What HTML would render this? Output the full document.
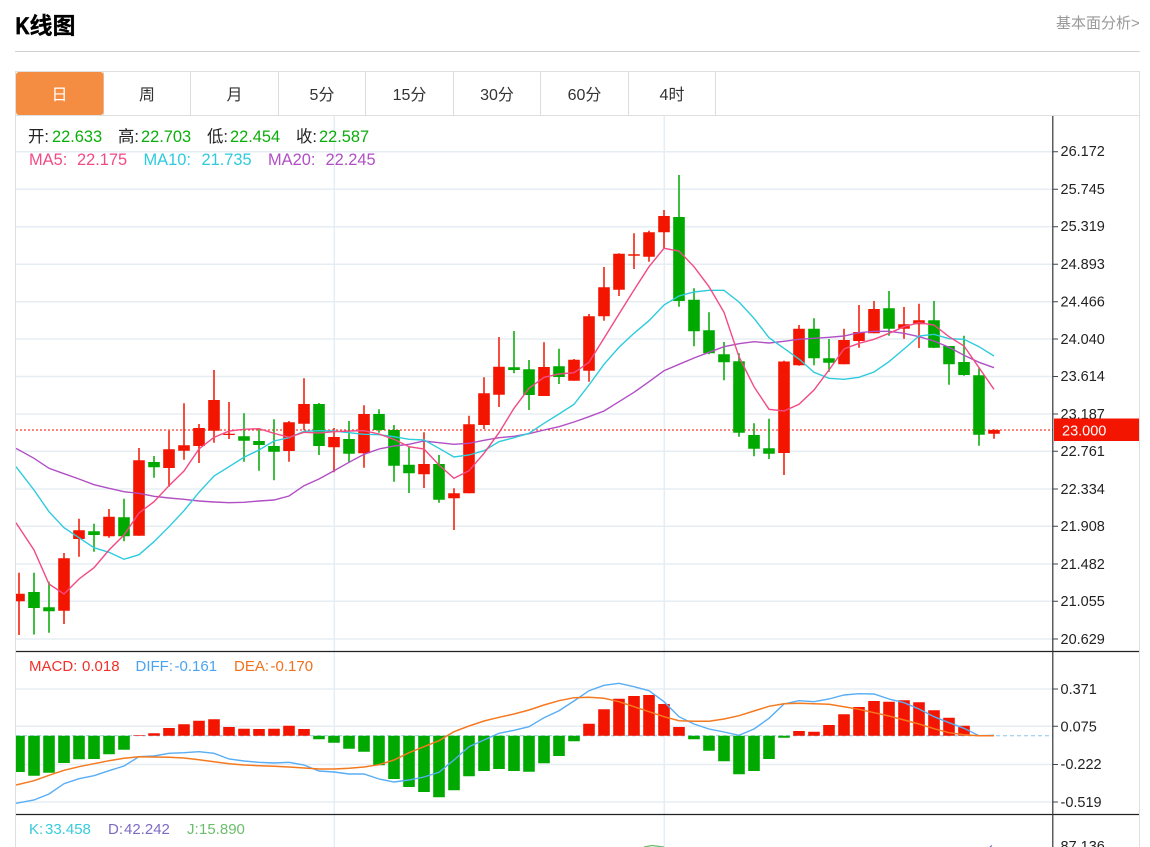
<!DOCTYPE html>
<html lang="zh"><head><meta charset="utf-8"><title>K线图</title>
<style>
html,body{margin:0;padding:0;background:#fff;width:1150px;height:847px;overflow:hidden}
svg{display:block;position:absolute;left:0;top:0}
text{font-family:"Liberation Sans","Noto Sans CJK SC",sans-serif;white-space:pre}
.ax{font-size:14.5px;fill:#222}
.t{font-size:16px;fill:#333;text-anchor:middle}
.l{font-size:16.4px}
.s{font-size:15px}
</style></head><body>
<svg width="1150" height="847" viewBox="0 0 1150 847" xmlns="http://www.w3.org/2000/svg">
<defs><clipPath id="c"><rect x="16" y="116" width="1037" height="731"/></clipPath></defs>
<text x="15.5" y="34" textLength="14" lengthAdjust="spacingAndGlyphs" style="font-size:24.5px;font-weight:bold;fill:#000;stroke:#000;stroke-width:.7">K</text>
<text x="29.5" y="33.5" style="font-size:23px;font-weight:bold;fill:#000;stroke:#000;stroke-width:.3">线图</text>
<text x="1056" y="28" style="font-size:15px;fill:#999">基本面分析&gt;</text>
<path d="M15 51.5H1140" stroke="#d2d2d2" fill="none"/>
<!-- frame -->
<path d="M15.5 847V71.5H1139.5V847" stroke="#dfdfdf" fill="none"/>
<path d="M15.5 115.5H1139.5" stroke="#dfdfdf" fill="none"/>
<path d="M103.5 72V115M190.5 72V115M278.5 72V115M365.5 72V115M453.5 72V115M540.5 72V115M628.5 72V115M715.5 72V115" stroke="#dcdcdc" fill="none"/>
<rect x="16" y="72" width="87.5" height="43" rx="3" fill="#f48c42"/>
<text x="59.5" y="100" class="t" style="fill:#fff">日</text>
<text x="147" y="100" class="t">周</text>
<text x="234.5" y="100" class="t">月</text>
<text x="322" y="100" class="t">5分</text>
<text x="409.5" y="100" class="t">15分</text>
<text x="497" y="100" class="t">30分</text>
<text x="584.5" y="100" class="t">60分</text>
<text x="672" y="100" class="t">4时</text>
<!-- grid -->
<path d="M16 151.7H1053M16 189.2H1053M16 226.7H1053M16 264.2H1053M16 301.7H1053M16 339H1053M16 376.5H1053M16 414H1053M16 451.3H1053M16 489H1053M16 526.3H1053M16 564H1053M16 601.3H1053M16 639H1053M16 689H1053M16 726.3H1053M16 764.5H1053M16 802H1053M334.3 116V847M664.3 116V847" stroke="#e6eef4" stroke-width="1.5" fill="none"/>
<path d="M16 430H1053" stroke="#f33c30" stroke-width="1.3" stroke-dasharray="2 2" fill="none"/>
<path d="M16 735.7H1053" stroke="#8cc6e8" stroke-width="1" stroke-dasharray="4 3" fill="none"/>
<g clip-path="url(#c)" fill="none">
<!-- candles wicks -->
<path stroke="#f41500" stroke-width="1.5" d="M19 572.7V635M64 553V624M79 518.7V556.7M109 509V537.7M139 448V535.7M169 430.7V486.7M184 403.3V459.7M199 424V463M214 370V442.7M229 402V439M289 421V461.7M304 378.3V430M334 428V472.3M364 405.3V467.7M424 432.3V488M454 488.3V530M469 415.7V493.3M484 377.3V429M499 337V407M544 342.3V396M574 359V380.7M589 314V381.7M604 267V320.7M619 253.3V296M634 233.3V269M649 230.7V261.7M664 210V248M784 360.7V475M799 325V365.7M844 328.7V364.3M859 305V347.7M874 301V333.3M904 307V338.7M919 303.7V348M994 429.3V438.7"/>
<path stroke="#00a900" stroke-width="1.5" d="M34 572.7V634.5M49 581.7V632.7M94 523.7V551.7M124 498.7V541.3M154 456V477.7M244 413.3V461.7M259 429.3V470.7M274 419.3V480.3M319 403V455M349 421V462.3M379 409.3V432.7M394 425V481.7M409 446V493M439 455V502.7M514 331V373.3M529 360V410M559 348.7V384M679 175V306.7M694 288.3V346.3M709 312.3V354.3M724 342V380.3M739 353.3V436.7M754 423.3V456.3M769 418.7V459M814 318.3V365.3M829 339V371.7M889 291V335.7M934 301V348M949 346V384.7M964 335.7V375.7M979 368.3V445.7"/>
<!-- candle bodies -->
<path stroke="#f41500" stroke-width="11.6" d="M19 593.7V601.3M64 558.3V610.7M79 530.3V539M109 516.7V536.3M139 460.3V535.7M169 449.3V468M184 445.3V450.7M199 428V446M214 400V430.7M229 433.7V435M289 422.3V451M304 404V423.7M334 437V447.3M364 414V453.3M424 464V474.3M454 493.3V498.3M469 424.3V493.3M484 393.3V425M499 366.7V394.7M544 367V396M574 359.7V380.7M589 316.3V370.7M604 287.3V316.3M619 253.7V289.7M634 254.3V255.7M649 232.3V256.7M664 216V232.3M784 361.5V453M799 328.7V365.3M844 340V364.3M859 332V341M874 309V333.3M904 324.3V328.7M919 320.3V324.3M994 430V433.7"/>
<path stroke="#00a900" stroke-width="11.6" d="M34 592V608M49 607.3V611.3M94 531.3V535M124 517.3V536.3M154 462V467.3M244 436.3V440.7M259 441V445M274 446V451.7M319 404V446M349 439V453.7M379 414V430M394 430V465.7M409 464.7V473.3M439 464V499.7M514 367.3V370M529 369.3V395M559 366.3V377M679 217V301M694 299.7V331.3M709 330.3V353.3M724 354.3V362.3M739 361.3V432.7M754 435V448.7M769 448.3V453.7M814 328.7V358.3M829 358.3V362.7M889 308.3V328.7M934 320.3V347.7M949 346V364.3M964 362V375M979 375.3V434.7"/>
<!-- MA lines -->
<polyline stroke="#b14fc4" stroke-width="1.4" points="16,448.3 34,458.3 49,468.3 64,473.7 79,479 94,484.7 109,488.3 124,491.7 139,493.3 154,496.3 169,498 184,499.3 199,501 214,502 229,502.7 244,502.3 259,501 274,500 289,496 304,485.7 319,479 334,470.7 349,462.3 364,454.3 379,449 394,446 409,444.3 424,441 439,442.7 454,444.3 469,443.3 484,440.3 499,437.7 514,436.3 529,433.7 544,430 559,426.7 574,422 589,416.7 604,411 619,401.7 634,392.3 649,381.7 664,370.7 679,364.3 694,358 709,352.3 724,346.7 739,343.7 754,341.7 769,343 784,341.3 799,339.3 814,338.3 829,337.3 844,336 859,332.7 874,331.3 889,331.3 904,333.3 919,336.7 934,341 949,347.3 964,355.3 979,362.3 994,367.7"/>
<polyline stroke="#2ecbdd" stroke-width="1.4" points="16,466.7 34,490 49,511.7 64,527.7 79,537.7 94,547.7 109,552.3 124,559.3 139,554.7 154,541.7 169,526.7 184,510.7 199,492.3 214,476 229,466.7 244,457.3 259,450 274,441 289,437.7 304,431.3 319,430.7 334,431 349,432.7 364,434.3 379,434.7 394,436.7 409,439.3 424,440 439,448.3 454,457 469,455 484,450.7 499,441.7 514,437.7 529,433.3 544,423.3 559,414 574,404.3 589,385 604,364.3 619,347.3 634,333.3 649,320.7 664,305 679,296 694,292 709,290.3 724,290.3 739,302 754,318.3 769,337.7 784,348.3 799,359 814,372.3 829,378.3 844,379.3 859,377.3 874,372 889,361.7 904,349 919,336 934,334.3 949,338.7 964,339.3 979,346.7 994,356"/>
<polyline stroke="#f24a85" stroke-width="1.4" points="16,522.7 34,550 49,584 64,594 79,579 94,567.7 109,550 124,535 139,513 154,501.7 169,485.7 184,471 199,449 214,437.3 229,431 244,429.3 259,428.7 274,433.3 289,437.3 304,432.3 319,433 334,431.7 349,431 364,430.7 379,434 394,439.3 409,446.7 424,449 439,465 454,478.3 469,470.7 484,453.3 499,432.7 514,408.3 529,388.3 544,377.3 559,374 574,372.7 589,362.3 604,338.3 619,314 634,290 649,266.7 664,248.3 679,251 694,266.7 709,286.7 724,312.3 739,356.7 754,386.7 769,409.3 784,411 799,404.3 814,390 829,370 844,349 859,343.3 874,339.3 889,333.3 904,326.7 919,322.7 934,325 949,336.7 964,346 979,367.7 994,389.3"/>
<!-- MACD bars -->
<path stroke="#f41500" stroke-width="11.6" d="M139 735.2V735.9M154 733.3V735.7M169 728V735.7M184 724.3V735.7M199 720.7V735.7M214 719.3V735.7M229 727V735.7M244 728.7V735.7M259 729V735.7M274 728.7V735.7M289 725.7V735.7M304 729V735.7M589 723.7V735.7M604 709.3V735.7M619 698.7V735.7M634 696V735.7M649 695V735.7M664 704V735.7M679 727V735.7M799 731V735.7M814 731.7V735.7M829 725V735.7M844 714.3V735.7M859 707V735.7M874 701V735.7M889 701.7V735.7M904 700.3V735.7M919 702.3V735.7M934 710.3V735.7M949 717.7V735.7M964 725.7V735.7"/>
<path stroke="#00a900" stroke-width="11.6" d="M19 735.7V772M34 735.7V775.7M49 735.7V772.7M64 735.7V763M79 735.7V759.3M94 735.7V759M109 735.7V754.3M124 735.7V749.7M319 735.7V739.3M334 735.7V742.7M349 735.7V748.7M364 735.7V751.7M379 735.7V765.3M394 735.7V779M409 735.7V787M424 735.7V792M439 735.7V797.3M454 735.7V790.3M469 735.7V776.3M484 735.7V771M499 735.7V769M514 735.7V771M529 735.7V771.7M544 735.7V763.3M559 735.7V756M574 735.7V741.3M694 735.7V739.3M709 735.7V750.7M724 735.7V761.3M739 735.7V774.3M754 735.7V771M769 735.7V759M784 735.7V737.7"/>
<!-- DIFF / DEA -->
<polyline stroke="#58adf5" stroke-width="1.4" points="16,803.3 34,800 49,794 64,783.7 79,778.7 94,775.7 109,770.7 124,766 139,756.7 154,756 169,753.3 184,752.7 199,751.7 214,753.3 229,759 244,761 259,762.3 274,763 289,762.3 304,765 319,771 334,772 349,774 364,774 379,779 394,782 409,780 424,777 439,772.3 454,760 469,746.7 484,740 499,733.3 514,730.3 529,726.7 544,717.7 559,710.7 574,701 589,690.7 604,685.3 619,683.3 634,686.7 649,690.7 664,701.7 679,716.7 694,724 709,729 724,732 739,735.3 754,729 769,718.3 784,704 799,700.7 814,701.7 829,699 844,695 859,693.7 874,694 889,699 904,702.7 919,709 934,716.7 949,722.7 964,728.3 979,735.7 994,735.3"/>
<polyline stroke="#f5791f" stroke-width="1.5" points="16,785 34,780.7 49,775.3 64,770.3 79,766.7 94,763.7 109,760.7 124,758.3 139,756.7 154,757 169,757.3 184,758 199,759.7 214,761.7 229,763.7 244,765 259,765.7 274,766.3 289,767 304,768 319,769 334,769 349,768.3 364,767 379,764.7 394,760 409,752.7 424,746.7 439,740.7 454,731.7 469,726 484,721 499,717.3 514,714 529,710 544,705 559,700.7 574,697.7 589,697.3 604,698.3 619,701.7 634,706.7 649,711.7 664,716.7 679,720.7 694,721.3 709,721.3 724,719 739,715.7 754,711 769,706.3 784,703.7 799,703.3 814,703.7 829,704.3 844,706.7 859,709.3 874,712.7 889,716 904,720 919,724 934,728.7 949,732.7 964,734.7 979,735.7 994,735.7"/>
<!-- KDJ glimpse -->
<polyline stroke="#6cbd6c" stroke-width="1.3" points="644,847 652,845.5 664,847"/>
<path d="M990 847L992 845.5" stroke="#7e6bc4" stroke-width="1.3"/>
</g>
<!-- pane dividers -->
<path d="M16 651.5H1139M16 814.5H1139" stroke="#222" stroke-width="1.2" fill="none"/>
<path d="M1052.8 116V847" stroke="#333" stroke-width="1.2" fill="none"/>
<!-- ticks -->
<path d="M1053 151.7h5M1053 189.2h5M1053 226.7h5M1053 264.2h5M1053 301.7h5M1053 339h5M1053 376.5h5M1053 414h5M1053 451.3h5M1053 489h5M1053 526.3h5M1053 564h5M1053 601.3h5M1053 639h5M1053 689h5M1053 726.3h5M1053 764.5h5M1053 802h5" stroke="#444" stroke-width="1" fill="none"/>
<!-- axis labels -->
<text x="1060.5" y="156" class="ax">26.172</text>
<text x="1060.5" y="194" class="ax">25.745</text>
<text x="1060.5" y="231" class="ax">25.319</text>
<text x="1060.5" y="269" class="ax">24.893</text>
<text x="1060.5" y="306.5" class="ax">24.466</text>
<text x="1060.5" y="344" class="ax">24.040</text>
<text x="1060.5" y="381" class="ax">23.614</text>
<text x="1060.5" y="419" class="ax">23.187</text>
<text x="1060.5" y="456" class="ax">22.761</text>
<text x="1060.5" y="494" class="ax">22.334</text>
<text x="1060.5" y="531" class="ax">21.908</text>
<text x="1060.5" y="569" class="ax">21.482</text>
<text x="1060.5" y="606" class="ax">21.055</text>
<text x="1060.5" y="644" class="ax">20.629</text>
<rect x="1054" y="418.5" width="85" height="22.5" fill="#f41500"/>
<text x="1062" y="435.5" style="font-size:14.5px;fill:#fff">23.000</text>
<text x="1060.5" y="694" class="ax">0.371</text>
<text x="1060.5" y="731.5" class="ax">0.075</text>
<text x="1060.5" y="769" class="ax">-0.222</text>
<text x="1060.5" y="807" class="ax">-0.519</text>
<text x="1060.5" y="851" class="ax">87.136</text>
<!-- legends -->
<text x="28" y="142" class="l" fill="#222">开:</text><text x="52" y="142" class="l" fill="#0aae0a">22.633</text>
<text x="118" y="142" class="l" fill="#222">高:</text><text x="141" y="142" class="l" fill="#0aae0a">22.703</text>
<text x="207" y="142" class="l" fill="#222">低:</text><text x="230" y="142" class="l" fill="#0aae0a">22.454</text>
<text x="296" y="142" class="l" fill="#222">收:</text><text x="319" y="142" class="l" fill="#0aae0a">22.587</text>
<text x="29" y="165" class="l" fill="#f24a85">MA5:</text><text x="77" y="165" class="l" fill="#f24a85">22.175</text>
<text x="143.5" y="165" class="l" fill="#2ecbdd">MA10:</text><text x="201.5" y="165" class="l" fill="#2ecbdd">21.735</text>
<text x="268" y="165" class="l" fill="#b14fc4">MA20:</text><text x="325.5" y="165" class="l" fill="#b14fc4">22.245</text>
<text x="29" y="671" class="s" fill="#f2302a">MACD:</text><text x="82" y="671" class="s" fill="#f2302a">0.018</text>
<text x="135.5" y="671" class="s" fill="#4aa3f0">DIFF:</text><text x="174.5" y="671" class="s" fill="#4aa3f0">-0.161</text>
<text x="234" y="671" class="s" fill="#f0701e">DEA:</text><text x="270.5" y="671" class="s" fill="#f0701e">-0.170</text>
<text x="29" y="834" class="s" fill="#38cbdc">K:</text><text x="45" y="834" class="s" fill="#38cbdc">33.458</text>
<text x="108" y="834" class="s" fill="#7e6bc4">D:</text><text x="124" y="834" class="s" fill="#7e6bc4">42.242</text>
<text x="187" y="834" class="s" fill="#6cbd6c">J:</text><text x="199" y="834" class="s" fill="#6cbd6c">15.890</text>
</svg>
</body></html>
